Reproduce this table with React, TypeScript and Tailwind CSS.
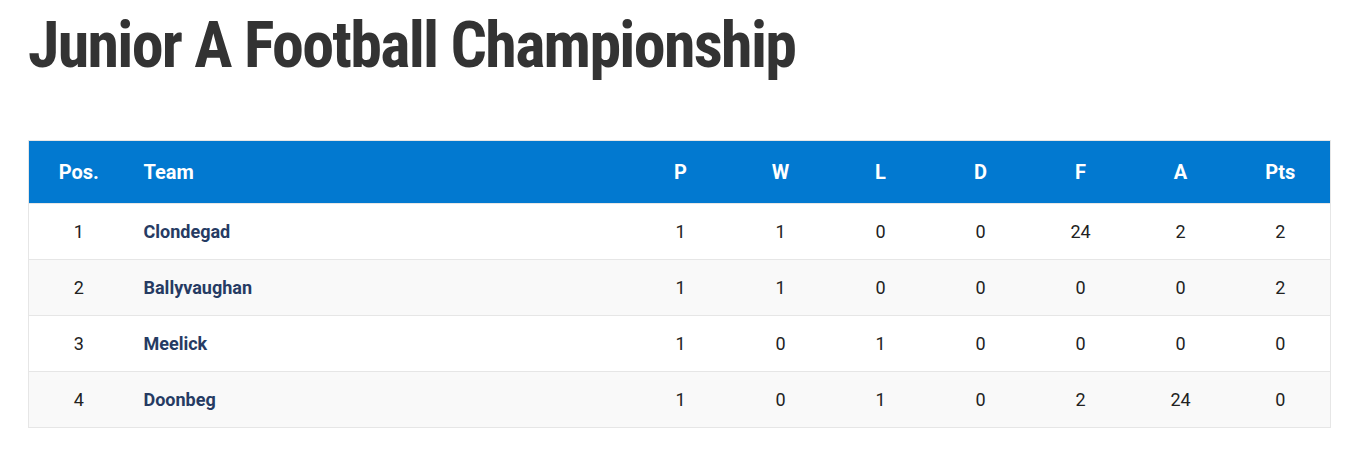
import React from "react";

const rows = [
  { pos: 1, team: "Clondegad", p: 1, w: 1, l: 0, d: 0, f: 24, a: 2, pts: 2 },
  { pos: 2, team: "Ballyvaughan", p: 1, w: 1, l: 0, d: 0, f: 0, a: 0, pts: 2 },
  { pos: 3, team: "Meelick", p: 1, w: 0, l: 1, d: 0, f: 0, a: 0, pts: 0 },
  { pos: 4, team: "Doonbeg", p: 1, w: 0, l: 1, d: 0, f: 2, a: 24, pts: 0 },
];

export default function App() {
  return (
    <div className="bg-white min-h-[465px] px-[28px] pt-[14px]" style={{ fontFamily: "Roboto, 'Noto Sans', sans-serif" }}>
      <h1 className="text-[64px] leading-[64px] font-bold text-[#333333] font-stretch-condensed tracking-[-1.7px]">
        Junior A Football Championship
      </h1>
      <table className="mt-[62px] w-[1303px] border-collapse border border-[#e6e6e6]">
        <thead>
          <tr className="bg-[#0279d0] text-white text-[20px] font-bold h-[63px]">
            <th className="w-[100px] text-center font-bold">Pos.</th>
            <th className="text-left pl-[15px] font-bold">Team</th>
            {["P", "W", "L", "D", "F", "A", "Pts"].map((h) => (
              <th key={h} className="w-[100px] text-center font-bold">{h}</th>
            ))}
          </tr>
        </thead>
        <tbody>
          {rows.map((r, i) => (
            <tr key={r.pos} className={`${i % 2 === 1 ? "bg-[#f9f9f9]" : "bg-white"} h-[56px] border-t border-[#e6e6e6] text-[18px] text-[#222222]`}>
              <td className="text-center">{r.pos}</td>
              <td className="pl-[15px] font-bold text-[#263b63]">{r.team}</td>
              <td className="text-center">{r.p}</td>
              <td className="text-center">{r.w}</td>
              <td className="text-center">{r.l}</td>
              <td className="text-center">{r.d}</td>
              <td className="text-center">{r.f}</td>
              <td className="text-center">{r.a}</td>
              <td className="text-center">{r.pts}</td>
            </tr>
          ))}
        </tbody>
      </table>
    </div>
  );
}
